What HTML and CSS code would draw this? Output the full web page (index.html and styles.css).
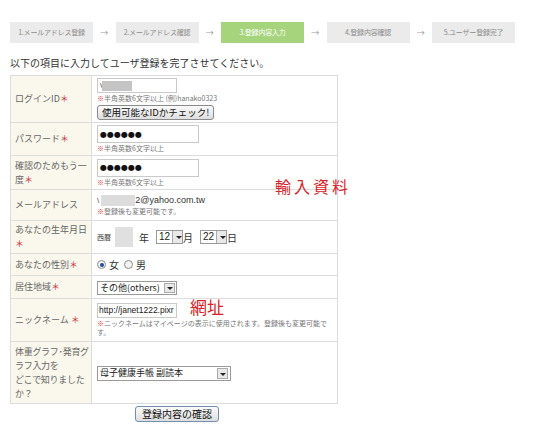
FILE: index.html
```html
<!DOCTYPE html>
<html lang="ja">
<head>
<meta charset="utf-8">
<title>ユーザ登録</title>
<link rel="stylesheet" href="styles.css">
</head>
<body>
<div class="page">
  <div class="steps">
    <div class="step">1.メールアドレス登録</div>
    <div class="arrow">→</div>
    <div class="step">2.メールアドレス確認</div>
    <div class="arrow">→</div>
    <div class="step active">3.登録内容入力</div>
    <div class="arrow">→</div>
    <div class="step">4.登録内容確認</div>
    <div class="arrow">→</div>
    <div class="step">5.ユーザー登録完了</div>
  </div>

  <p class="lead">以下の項目に入力してユーザ登録を完了させてください。</p>

  <div class="form-wrap">
    <table class="form">
      <tr class="r-login">
        <th>ログインID<span class="req">＊</span></th>
        <td>
          <div class="input w80"><span class="mark">\</span><span class="blur b1"></span></div>
          <div class="note"><span class="kome">※</span>半角英数6文字以上 (例)hanako0323</div>
          <div class="btn">使用可能なIDかチェック!</div>
        </td>
      </tr>
      <tr class="r-pass">
        <th>パスワード<span class="req">＊</span></th>
        <td>
          <div class="input w102 dots">●●●●●●</div>
          <div class="note"><span class="kome">※</span>半角英数6文字以上</div>
        </td>
      </tr>
      <tr class="r-conf">
        <th>確認のためもう一<br>度<span class="req">＊</span></th>
        <td>
          <div class="input w102 dots">●●●●●●</div>
          <div class="note"><span class="kome">※</span>半角英数6文字以上</div>
        </td>
      </tr>
      <tr class="r-mail">
        <th>メールアドレス</th>
        <td>
          <div class="mailline"><span class="mark">\</span><span class="blur b2"></span>2@yahoo.com.tw</div>
          <div class="note"><span class="kome">※</span>登録後も変更可能です。</div>
        </td>
      </tr>
      <tr class="r-birth">
        <th>あなたの生年月日<br><span class="req">＊</span></th>
        <td>
          <div class="birth">
            <span class="small">西暦</span><span class="blur b3"></span><span>年</span>
            <span class="sel s-num"><span class="val">12</span><span class="dd"></span></span><span>月</span>
            <span class="sel s-num"><span class="val">22</span><span class="dd"></span></span><span>日</span>
          </div>
        </td>
      </tr>
      <tr class="r-sex">
        <th>あなたの性別<span class="req">＊</span></th>
        <td>
          <div class="radios">
            <span class="radio on"></span><span>女</span>
            <span class="radio"></span><span>男</span>
          </div>
        </td>
      </tr>
      <tr class="r-area">
        <th>居住地域<span class="req">＊</span></th>
        <td>
          <span class="sel s-area"><span class="val">その他(others)</span><span class="dd"></span></span>
        </td>
      </tr>
      <tr class="r-nick">
        <th>ニックネーム <span class="req">＊</span></th>
        <td>
          <div class="input w80 url">http://janet1222.pixr</div>
          <div class="note">
            <span class="kome">※</span>ニックネームはマイページの表示に使用されます。登録後も変更可能で<br>す。
          </div>
        </td>
      </tr>
      <tr class="r-know">
        <th>体重グラフ･発育グ<br>ラフ入力を<br>どこで知りました<br>か？</th>
        <td>
          <span class="sel s-know"><span class="val">母子健康手帳 副読本</span><span class="dd"></span></span>
        </td>
      </tr>
    </table>
    <div class="memo memo1">輸入資料</div>
    <div class="memo memo2">網址</div>
  </div>

  <div class="submit-row">
    <div class="btn submit">登録内容の確認</div>
  </div>
</div>
</body>
</html>
```

FILE: styles.css
```css
* { box-sizing: border-box; }
html, body { margin: 0; padding: 0; background: #fff; }
body {
  font-family: "Noto Sans CJK JP", "Noto Sans", sans-serif;
  color: #555;
}
.page { padding: 22px 0 0 10px; width: 550px; }

.steps { display: flex; align-items: center; height: 21px; }
.step {
  width: 83px; height: 21px;
  background: #ebebeb; color: #8a8a8a;
  font-size: 7px; line-height: 21px; text-align: center;
  letter-spacing: -0.2px; white-space: nowrap;
}
.step.active { background: #a6d47c; color: #fff; }
.arrow {
  width: 22.5px; text-align: center;
  font-size: 8px; color: #9a9a9a; line-height: 21px;
}

.lead {
  margin: 13px 0 0 0;
  font-size: 10px; line-height: 14px; color: #333;
}

.form-wrap { position: relative; margin-top: 5px; width: 328px; }
.form {
  border-collapse: collapse; width: 328px;
  table-layout: fixed;
}
.form th, .form td { border: 1px solid #dcdcdc; padding: 0; }
.form th {
  width: 81px; background: #faf8ec;
  font-weight: normal; text-align: left;
  font-size: 9px; line-height: 14px; color: #666;
  padding: 0 2px 0 4px; vertical-align: middle;
  white-space: nowrap; overflow: hidden;
}
.r-know th { letter-spacing: -0.3px; }
.form td { padding: 0 4px 0 5px; vertical-align: middle; font-size: 10px; color: #333; }
.req { color: #c8282d; font-size: 9px; }

.r-login { height: 47px; }
.r-pass { height: 33px; }
.r-conf { height: 34px; }
.r-mail { height: 31px; }
.r-birth { height: 33px; }
.r-sex { height: 22px; }
.r-area { height: 23px; }
.r-nick { height: 43px; }
.r-know { height: 62px; }

.input {
  height: 15px; border: 1px solid #c9c9c9; background: #fff;
  font-size: 9px; line-height: 13px; padding: 0 2px;
  display: flex; align-items: center; color: #222;
  font-family: "Liberation Sans", sans-serif; white-space: nowrap; overflow: hidden;
}
.w80 { width: 80px; }
.w102 { width: 102px; height: 18px; }
.dots { font-size: 8px; color: #111; font-family: "DejaVu Sans", sans-serif; }
.url { font-size: 8.5px; padding: 0 1px; }
.mark { font-size: 8px; color: #444; }
.blur { display: inline-block; background: #c4c4c4; height: 10px; }
.b1 { width: 30px; }
.b2 { width: 34px; height: 11px; background: #dcdcdc; }
.b3 { width: 18px; height: 20px; background: #e0e0e0; margin: 0 6px 0 4px; }

.note { font-size: 7px; line-height: 9px; color: #777; margin-top: 1px; }
.kome { color: #d33; }

.btn {
  display: inline-block; margin-top: 2px;
  border: 1px solid #8a8a8a; border-radius: 3px;
  background: linear-gradient(#fbfbfb, #dedede);
  font-size: 9.5px; line-height: 13px; color: #111;
  padding: 0 4px; height: 15px; white-space: nowrap;
}

.mailline { font-size: 9px; color: #333; display: flex; align-items: center; font-family: "Liberation Sans", sans-serif; }
.mailline .mark { margin-right: 2px; }

.birth { display: flex; align-items: center; font-size: 10px; }
.birth .small { font-size: 7px; }
.birth > span + .sel { margin-left: 7px; }
.sel {
  display: inline-flex; align-items: center;
  height: 14px; border: 1px solid #9a9a9a; background: #fff;
}
.sel .val { font-size: 9px; line-height: 12px; padding: 0 2px; color: #222; flex: 1; white-space: nowrap; }
.sel .dd {
  width: 11px; height: 12px; background: #e8e8e8; border-left: 1px solid #aaa;
  position: relative;
}
.sel .dd::after {
  content: ""; position: absolute; left: 3px; top: 5px;
  border-left: 3px solid transparent; border-right: 3px solid transparent;
  border-top: 3px solid #222;
}
.s-num { width: 27px; }
.s-num .val { font-family: "Liberation Sans", sans-serif; font-size: 10px; }
.s-area { width: 80px; }
.s-area .dd { margin-left: 2px; border: 1px solid #aaa; height: 10px; margin-right: 1px; }
.s-area .dd::after { top: 3px; left: 2px; }
.s-know { width: 134px; height: 15px; }
.s-know .dd { border: 1px solid #aaa; height: 11px; margin-right: 2px; }
.s-know .dd::after { top: 4px; left: 2px; }

.radios { display: flex; align-items: center; font-size: 10px; color: #333; }
.radio {
  width: 9px; height: 9px; border-radius: 50%;
  border: 1px solid #8c8c8c; background: #f2f2f2; margin-right: 3px;
  position: relative;
}
.radio.on::after {
  content: ""; position: absolute; left: 1.5px; top: 1.5px;
  width: 4px; height: 4px; border-radius: 50%; background: #1f4fa0;
}
.radios span + .radio { margin-left: 5px; }

.memo {
  position: absolute; color: #d8232a; white-space: nowrap;
  font-family: "Noto Sans CJK TC", sans-serif;
}
.memo1 { left: 265px; top: 99px; font-size: 16px; letter-spacing: 3px; }
.memo2 { left: 180px; top: 219px; font-size: 17px; }

.submit-row { width: 328px; display: flex; padding-left: 125px; margin-top: 0; }
.submit { font-size: 10px; padding: 0 6px; height: 16px; border-color: #6f8fae; }
```
